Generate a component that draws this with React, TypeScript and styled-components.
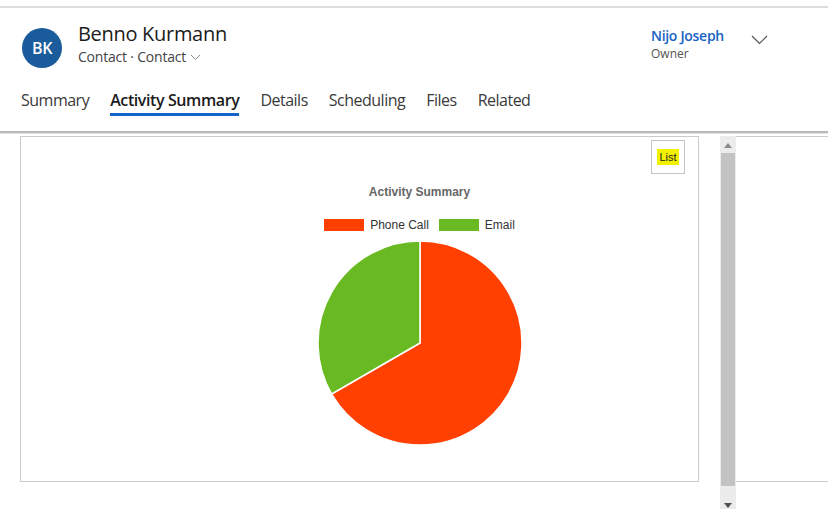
import React from "react";
import styled, { createGlobalStyle } from "styled-components";

const GlobalStyle = createGlobalStyle`
  html, body {
    margin: 0;
    padding: 0;
    background: #fff;
    font-family: "Open Sans", "Noto Sans", sans-serif;
    color: #242424;
  }
`;

const Page = styled.div`
  width: 828px;
  height: 509px;
  overflow: hidden;
  display: flex;
  flex-direction: column;
  background: #fff;
`;

const TopRule = styled.div`
  height: 6px;
  flex-shrink: 0;
  border-bottom: 2px solid #dcdcdc;
`;

const Header = styled.header`
  height: 123px;
  flex-shrink: 0;
  border-bottom: 2px solid #b9b9b9;
  box-shadow: 0 1px 0 #e4e4e4;
  display: flex;
  flex-direction: column;
`;

const TitleRow = styled.div`
  display: flex;
  align-items: flex-start;
  padding: 15px 0 0 22px;
  height: 57px;
`;

const Avatar = styled.div`
  width: 40px;
  height: 40px;
  border-radius: 50%;
  background: #1a5b9c;
  color: #fff;
  font-size: 16px;
  font-weight: 600;
  display: flex;
  align-items: center;
  justify-content: center;
  margin-top: 5px;
  letter-spacing: -0.5px;
`;

const NameBlock = styled.div`
  display: flex;
  flex-direction: column;
  margin-left: 16px;
  flex: 1;
`;

const Name = styled.div`
  font-size: 20px;
  line-height: 22px;
  color: #1b1b1b;
  letter-spacing: -0.3px;
`;

const SubTitle = styled.div`
  font-size: 14px;
  line-height: 18px;
  margin-top: 3px;
  color: #444;
  display: flex;
  align-items: center;
  gap: 4px;
  letter-spacing: -0.2px;
`;

const Owner = styled.div`
  display: flex;
  align-items: flex-start;
  margin-right: 60px;
  padding-top: 4px;
`;

const OwnerText = styled.div`
  display: flex;
  flex-direction: column;
  width: 100px;
`;

const OwnerName = styled.a`
  font-size: 14px;
  font-weight: 600;
  line-height: 18px;
  color: #1662c4;
  letter-spacing: -0.3px;
`;

const OwnerRole = styled.span`
  font-size: 12px;
  line-height: 16px;
  margin-top: 1px;
  color: #555;
`;

const ChevronBtn = styled.div`
  margin-top: 8px;
  display: flex;
`;

const Tabs = styled.nav`
  display: flex;
  padding-left: 21px;
  gap: 21px;
  margin-top: 9px;
`;

const Tab = styled.div<{ $active?: boolean }>`
  font-size: 16px;
  line-height: 22px;
  padding-bottom: 2px;
  color: ${(p) => (p.$active ? "#1b1b1b" : "#3a3a3a")};
  font-weight: ${(p) => (p.$active ? 600 : 400)};
  letter-spacing: ${(p) => (p.$active ? "-0.4px" : "-0.5px")};
  border-bottom: 3px solid ${(p) => (p.$active ? "#1562c6" : "transparent")};
`;

const Content = styled.div`
  display: flex;
  flex: 1 0 auto;
  padding-top: 3px;
`;

const ChartPanel = styled.section`
  position: relative;
  height: 344px;
  margin-left: 20px;
  border: 1px solid #cbcbcb;
  display: flex;
  flex-direction: column;
  align-items: center;
  padding-left: 120px;
  box-sizing: content-box;
  width: 557px;
`;

const ListButton = styled.div`
  position: absolute;
  top: 3px;
  right: 13px;
  width: 32px;
  height: 32px;
  border: 1px solid #c4c4c4;
  display: flex;
  align-items: center;
  justify-content: center;
`;

const Highlight = styled.span`
  background: #f2f200;
  font-family: "Liberation Sans", Arial, sans-serif;
  font-size: 11px;
  line-height: 14px;
  padding: 1px 2px;
  color: #222;
`;

const ChartTitle = styled.div`
  margin-top: 48px;
  font-family: "Liberation Sans", Arial, sans-serif;
  font-weight: 700;
  font-size: 12px;
  color: #666;
`;

const Legend = styled.div`
  margin-top: 19px;
  display: flex;
  align-items: center;
  gap: 10px;
  font-family: "Liberation Sans", Arial, sans-serif;
  font-size: 12px;
  color: #333;
`;

const LegendItem = styled.div`
  display: flex;
  align-items: center;
  gap: 6px;
`;

const Swatch = styled.span<{ $color: string }>`
  width: 40px;
  height: 12px;
  background: ${(p) => p.$color};
  display: inline-block;
`;

const PieWrap = styled.div`
  margin-top: 8px;
  display: flex;
`;

const Scrollbar = styled.div`
  width: 16px;
  margin-left: 21px;
  background: #ececec;
  display: flex;
  flex-direction: column;
  align-items: center;
`;

const Arrow = styled.div<{ $down?: boolean }>`
  height: 16px;
  flex-shrink: 0;
  display: flex;
  align-items: center;
  justify-content: center;
  margin-top: ${(p) => (p.$down ? "11px" : "1px")};
`;

const Thumb = styled.div`
  flex-shrink: 0;
  width: 14px;
  height: 333px;
  background: #c3c3c3;
`;

const SidePanel = styled.div`
  flex: 1;
  height: 344px;
  border-top: 1px solid #cbcbcb;
  border-bottom: 1px solid #cbcbcb;
`;

const RED = "#ff4000";
const GREEN = "#69ba22";

const Pie = () => {
  const cx = 103;
  const cy = 103;
  const r = 102;
  const a = (240 * Math.PI) / 180;
  const x = cx + r * Math.sin(a);
  const y = cy - r * Math.cos(a);
  return (
    <svg width="206" height="206" viewBox="0 0 206 206">
      <path
        d={`M${cx},${cy} L${cx},${cy - r} A${r},${r} 0 1 1 ${x},${y} Z`}
        fill={RED}
        stroke="#fff"
        strokeWidth="1.5"
      />
      <path
        d={`M${cx},${cy} L${x},${y} A${r},${r} 0 0 1 ${cx},${cy - r} Z`}
        fill={GREEN}
        stroke="#fff"
        strokeWidth="1.5"
      />
    </svg>
  );
};

const tabs = ["Summary", "Activity Summary", "Details", "Scheduling", "Files", "Related"];

export default function App() {
  return (
    <Page>
      <GlobalStyle />
      <TopRule />
      <Header>
        <TitleRow>
          <Avatar>BK</Avatar>
          <NameBlock>
            <Name>Benno Kurmann</Name>
            <SubTitle>
              Contact · Contact
              <svg width="11" height="7" viewBox="0 0 11 7">
                <path d="M1 1l4.5 4.5L10 1" fill="none" stroke="#888" strokeWidth="1" />
              </svg>
            </SubTitle>
          </NameBlock>
          <Owner>
            <OwnerText>
              <OwnerName>Nijo Joseph</OwnerName>
              <OwnerRole>Owner</OwnerRole>
            </OwnerText>
            <ChevronBtn>
              <svg width="17" height="10" viewBox="0 0 17 10">
                <path d="M1 1l7.5 7.5L16 1" fill="none" stroke="#555" strokeWidth="1.2" />
              </svg>
            </ChevronBtn>
          </Owner>
        </TitleRow>
        <Tabs>
          {tabs.map((t) => (
            <Tab key={t} $active={t === "Activity Summary"}>
              {t}
            </Tab>
          ))}
        </Tabs>
      </Header>
      <Content>
        <ChartPanel>
          <ListButton>
            <Highlight>List</Highlight>
          </ListButton>
          <ChartTitle>Activity Summary</ChartTitle>
          <Legend>
            <LegendItem>
              <Swatch $color={RED} />
              Phone Call
            </LegendItem>
            <LegendItem>
              <Swatch $color={GREEN} />
              Email
            </LegendItem>
          </Legend>
          <PieWrap>
            <Pie />
          </PieWrap>
        </ChartPanel>
        <Scrollbar>
          <Arrow>
            <svg width="8" height="5" viewBox="0 0 8 5">
              <path d="M0 5L4 0L8 5Z" fill="#8a8a8a" />
            </svg>
          </Arrow>
          <Thumb />
          <Arrow $down>
            <svg width="8" height="5" viewBox="0 0 8 5">
              <path d="M0 0L4 5L8 0Z" fill="#505050" />
            </svg>
          </Arrow>
        </Scrollbar>
        <SidePanel />
      </Content>
    </Page>
  );
}
